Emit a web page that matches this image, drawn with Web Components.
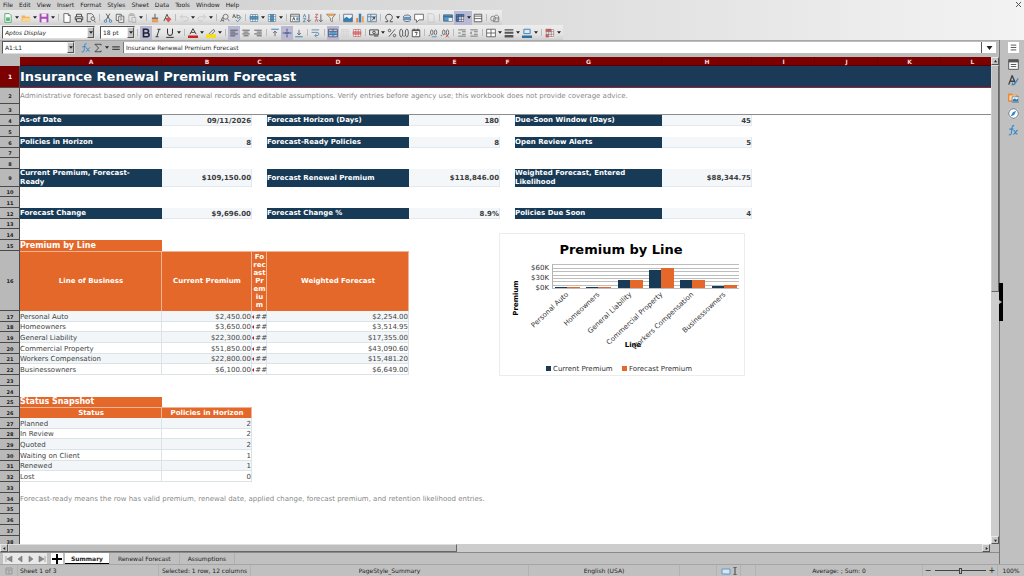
<!DOCTYPE html>
<html lang="en">
<head>
<meta charset="utf-8">
<title>Insurance Renewal Premium Forecast</title>
<style>
html, body { margin: 0; height: 100%; }
body { font-family: "DejaVu Sans", Verdana, sans-serif; font-size: 6px; color: #1c1c1c; background: #c0c0c0; overflow: hidden; }
</style>
</head>
<body>
<calc-window></calc-window>
<script>
const define = (name, render) => customElements.define(name, class extends HTMLElement {
  connectedCallback() {
    if (!this.shadowRoot) this.attachShadow({ mode: 'open' }).innerHTML = render(this);
  }
});

/* ---------- icons, 16 x 16 ---------- */
const s = (d, c = '#555', w = 1.3) => `<path d="${d}" fill="none" stroke="${c}" stroke-width="${w}"/>`;
const f = (d, c) => `<path d="${d}" fill="${c}"/>`;
const grid = c => s('M2 2.500h12v11H2zM2 6h12M2 10h12M6 2.500v11M10 2.500v11', c, 1.1);
const lines = (a, b) => s(`M2 3.500h12M${a} 6.500h${b}M2 9.500h12M${a} 12.500h${b}`, '#444', 1.3);
const icons = {
  new: f('M3 1h7l3 3v11H3z', '#fff') + s('M3 1h7l3 3v11H3z', '#3b9c5a') + f('M5 7h6v6H5z', '#58b778'),
  open: f('M1 4h5l1 2h7v8H1z', '#f3b35c') + f('M3 8h13l-2 6H1z', '#fbd38f'),
  save: f('M1 1h14v14H1z', '#a54bb5') + f('M4 1h8v5H4zM4 9h8v6H4z', '#f5e6f7'),
  pdf: f('M3 1h7l3 3v11H3z', '#fff') + s('M3 1h7l3 3v11H3zM10 1v3h3'),
  print: s('M4 6V2h8v4M4 11H2V6h12v5h-2M4 9h8v5H4z', '#444', 1.5),
  preview: s('M12 6V4L9 1H2v13h6', '#555') + s('M8 9a3 3 0 1 0 6 0a3 3 0 1 0 -6 0M13 12l2 3', '#555'),
  cut: s('M5 1l6 10M11 1L5 11', '#444') + s('M2 13a2 2 0 1 0 4 0a2 2 0 1 0 -4 0M10 13a2 2 0 1 0 4 0a2 2 0 1 0 -4 0', '#3a86c4', 1.5),
  copy: f('M2 2h8v10H2z', '#eee') + s('M2 2h8v10H2z') + f('M6 5h8v10H6z', '#fff') + s('M6 5h8v10H6zM8 8h4M8 11h4'),
  paste: s('M3 3h9v4M3 3v11h4M5 1h5v3H5zM8 7h6v8H8z', '#aaa'),
  clone: f('M7 1h2v6h4v3H3V7h4z', '#777') + f('M3 10h10v5H3z', '#ef9a55'),
  clear: s('M3 13L8 2l3 7M5 9h6', '#555', 1.6) + f('M6 10l5-4 4 4-5 5z', '#d9534f'),
  undo: s('M3 6h7a4 3 0 0 1 0 7H7M6 2L2 6l4 4', '#c4c4c4'),
  redo: s('M13 6H6a4 3 0 0 0 0 7h3M10 2l4 4-4 4', '#c4c4c4'),
  find: s('M5 6a4 4 0 1 0 8 0a4 4 0 1 0 -8 0M12 9l3 4M1 14l3-7 2 7M2 12h4', '#666'),
  spell: s('M1 8l2-6 3 6M2 6h3M8 2v6h3a2 2 0 0 0 0-4H8', '#666') + s('M6 11l3 3 6-7', '#3a86c4'),
  row: f('M1 2h14v12H1z', '#fff') + f('M1 5h14v5H1z', '#4d9fd6') + grid('#55758c'),
  col: f('M1 2h14v12H1z', '#fff') + f('M5 2h6v12H5z', '#4d9fd6') + grid('#55758c'),
  table: f('M1 2h14v12H1z', '#fff') + s('M1 2h14v12H1zM1 5h14', '#555') + s('M4 12l2-5 2 5', '#333') + f('M10 7h4v5h-4z', '#4d9fd6'),
  asc: s('M2 7l2-5 2 5M2 9h4l-4 5h4', '#4a7da5') + s('M11 2v12M8 11l3 3 3-3', '#555'),
  desc: s('M2 2h4L2 7h4M2 14l2-5 2 5', '#b8505a') + s('M11 2v12M8 11l3 3 3-3', '#555'),
  filter: f('M1 2h14l-5 6v6l-4-2V8z', '#fff') + s('M1 2h14l-5 6v6l-3-2V8z', '#666') + f('M2 2h12l-2 3H4z', '#f0a050'),
  image: f('M1 2h14v12H1z', '#e9f4fb') + f('M1 14V9l5-3 4 3 5-3v8z', '#2f7fbb') + s('M1 2h14v12H1z', '#667'),
  chart: f('M2 8h3v7H2z', '#e98b3e') + f('M6 1h4v14H6z', '#3a7fb5') + f('M11 5h3v10h-3z', '#e9a75e'),
  pivot: s('M1 2h14v12H1zM1 6h14M6 2v12', '#4a7da5') + s('M8 12l4-5M12 7v3M12 7H9', '#333'),
  omega: s('M2 14h4v-2C0 8 3 2 8 2s8 6 2 10v2h4', '#444', 1.5),
  link: s('M2 7c0-5 12-5 12 0zM2 10c0 5 12 5 12 0z', '#557') + f('M2 7h12v3H2z', '#4d9fd6'),
  comment: f('M1 2h14v9H8l-4 4v-4H1z', '#fff') + s('M1 2h14v9H8l-4 4v-4H1z'),
  header: s('M3 1h7l3 3v11H3z', '#c8c8c8'),
  edit: f('M1 3h14v10H1z', '#4d9fd6') + s('M1 3h14v10H1zM1 6h14', '#456') + f('M9 8h6v5H9z', '#eee'),
  freeze: f('M1 2h14v12H1z', '#fff') + f('M1 2h14v4H1zM1 2h5v12H1z', '#3a86c4') + grid('#446'),
  split: f('M2 2h12v12H2z', '#fff') + s('M2 2h12v12H2zM2 5h12M2 9h12', '#555', 1.4),
  shapes: s('M1 9a4 4 0 1 0 8 0a4 4 0 1 0 -8 0M7 5a4 4 0 1 1 5 6', '#777') + s('M6 8h8v6H6z', '#777'),
  underline: s('M4 1v7a4 4 0 0 0 8 0V1M2 15h12', '#333', 1.6),
  bold: s('M4 2h5a3 3 0 0 1 0 6H4zM4 8h6a3 3 0 0 1 0 6H4z', '#223', 2.6),
  italic: s('M7 2h5M4 14h5M10 2L6 14', '#333', 1.5),
  fcolor: s('M3 10L8 1l5 9M5 7h6', '#444', 1.6) + f('M0 12h16v4H0z', '#c9211e'),
  hcolor: s('M5 9l7-7 2 3-6 6z', '#555') + f('M0 10h16v6H0z', '#f2e01c'),
  left: lines(2, 8), center: lines(4, 8), right: lines(6, 8),
  top: s('M2 2h12', '#3a86c4', 1.6) + s('M8 13V5M5 8l3-3 3 3', '#555'),
  middle: s('M1 8h14', '#3a5f9c', 1.6) + s('M8 1v5M8 15v-5M5 8h6', '#446'),
  bottom: s('M2 14h12', '#3a86c4', 1.6) + s('M8 3v8M5 8l3 3 3-3', '#555'),
  wrap: s('M1 3h12M1 7h10a3 3 0 0 1 0 5H7M9 9l-3 3 3 3', '#4a7da5'),
  merge: f('M1 2h14v12H1z', '#fff') + f('M2 5h12v6H2z', '#4d9fd6') + s('M1 2h14v12H1zM8 2v3M8 11v3M1 5h14M1 11h14', '#446'),
  unmerge: grid('#cfcfcf'),
  cells: f('M1 2h14v12H1z', '#fff') + f('M1 6h14v4H1z', '#eb8f8a') + grid('#b95a5a'),
  currency: s('M1 3h14v8H1zM6 7a2 2 0 1 0 4 0a2 2 0 1 0 -4 0', '#444', 1.5) + f('M8 9h7v5H8z', '#777'),
  percent: s('M3 14L13 2M2 4a2 2 0 1 0 4 0a2 2 0 1 0 -4 0M10 12a2 2 0 1 0 4 0a2 2 0 1 0 -4 0', '#444'),
  number: s('M1 8a2 5 0 1 0 5 0a2 5 0 1 0 -5 0M10 8a2 5 0 1 0 5 0a2 5 0 1 0 -5 0M8 12v2', '#444'),
  date: f('M2 3h12v11H2z', '#fff') + s('M2 3h12v11H2zM5 1v3M11 1v3M6 7h4l-2 5', '#444', 1.4) + f('M2 3h12v2H2z', '#555'),
  addDec: s('M4 7a2 4 0 1 0 4 0a2 4 0 1 0 -4 0M10 7a2 4 0 1 0 4 0a2 4 0 1 0 -4 0M2 11v2', '#555') + s('M6 14h8', '#3a86c4'),
  delDec: s('M4 7a2 4 0 1 0 4 0a2 4 0 1 0 -4 0M10 7a2 4 0 1 0 4 0a2 4 0 1 0 -4 0M2 11v2', '#555') + s('M9 10l5 5M14 10l-5 5', '#c94b4b'),
  indent: s('M2 3h12M8 6h6M8 10h6M2 13h12M2 8h4', '#666'),
  outdent: s('M2 3h12M8 6h6M8 10h6M2 13h12M5 6L2 8l3 2', '#666'),
  borders: f('M1 2h14v12H1z', '#fff') + s('M1 2h14v12H1zM8 2v12M1 8h14', '#555'),
  style: f('M1 2h14v2H1zM1 6h14v3H1zM1 11h14v4H1z', '#555'),
  bcolor: s('M3 2h10v7H3z', '#3a86c4', 1.6) + f('M0 12h16v4H0z', '#2f6f9f'),
  cond: f('M1 1h14v14H1z', '#fff') + f('M1 1h9v5H1zM1 10h5v5H1z', '#e0605a') + grid('#8a6a6a'),
  settings: f('M0 0h16v16H0z', '#fff') + s('M4 4.500h8M4 8h8M4 11.500h8', '#555', 1.4),
  properties: f('M1 1h14v14H1z', '#fff') + s('M1 1h14v14H1zM4 8h8M4 11h8', '#555', 1.4) + f('M1 1h14v4H1z', '#555'),
  styles: s('M1 14L6 1l5 11M3 9h6', '#444', 2) + s('M15 5l-6 9H6l1-3', '#3a86c4', 1.7),
  gallery: f('M0 2h6l1 2h7v10H0z', '#e98b3e') + f('M2 5h10v7H2z', '#fbd9ae') + f('M6 7h10v8H6z', '#fff') + f('M7 14v-3l3-2 2 2 3-2v5z', '#2f7fbb') + s('M6 7h10v8H6z', '#567', 1),
  navigator: f('M0 8a8 8 0 1 0 16 0a8 8 0 1 0 -16 0', '#fff') + s('M1 8a7 7 0 1 0 14 0a7 7 0 1 0 -14 0', '#456') + f('M12 4L9 10l-5 2 3-6z', '#2f86c9'),
  fx: s('M9 1c-4-1-3 5-4 10c0 3-2 4-4 3M2 6h6M8 8c3-1 2 6 6 5M14 7l-6 7', '#2f86c9', 1.5),
  sigma: s('M13 4V2H3l6 6-6 6h10v-2', '#444', 1.5),
  equals: s('M2 6h12M2 10h12', '#444', 2)
};
const svg = (name, size = 10) => `<svg viewBox="0 0 16 16" width="${size}" height="${size}" aria-hidden="true">${icons[name]}</svg>`;
const caret = '<svg class="caret" viewBox="0 0 6 4" width="4" height="3" aria-hidden="true"><path d="M0 0h6L3 4z" fill="#222"/></svg>';

/* ---------- menu ---------- */
define('menu-bar', () => `<style>
  :host { display: flex; align-items: center; justify-content: space-between; height: 10px; padding: 0 3px; }
  nav { display: flex; gap: 6px; }
  button { all: unset; line-height: 10px; }
</style><nav aria-label="Menu">${['File','Edit','View','Insert','Format','Styles','Sheet','Data','Tools','Window','Help'].map(m => `<button>${m}</button>`).join('')}</nav>
<button aria-label="Close"><svg viewBox="0 0 5 5" width="5" height="5"><path d="M0 0l5 5M5 0L0 5" stroke="#555"/></svg></button>`);

/* ---------- toolbars ---------- */
define('tool-bar', el => `<style>
  :host { display: flex; width: fit-content; align-items: center; height: 15px; padding: 0 1px 0 2px; background: linear-gradient(#ededed, #e4e4e4 60%, #cfcfcf); }
  button { all: unset; display: flex; align-items: center; height: 14px; }
  .i { width: 12px; display: flex; justify-content: center; height: 14px; align-items: center; }
  .c { width: 6px; display: flex; justify-content: center; }
  .on { background: #b9b9d3; }
  hr { border: 0; width: 1px; height: 7px; margin: 0 2px; background: #bbb; }
</style><slot></slot>${el.getAttribute('items').split(' ').map(n => {
  if (n === '|') return '<hr>';
  const name = n.replace(/[*>]/g, '');
  return `<button aria-label="${name}" class="${n.includes('*') ? 'on' : ''}"><span class="i">${svg(name)}</span>${n.includes('>') ? `<span class="c">${caret}</span>` : ''}</button>`;
}).join('')}`);

define('pick-list', el => `<style>
  :host { display: grid; box-sizing: border-box; height: 13px; background: #fff; border: 1px solid; border-color: #555 #ddd #ddd #555; margin-right: var(--after, 5px); }
  select, input, .b { grid-area: 1 / 1; }
  select, input { appearance: none; border: 0; background: none; padding: 0 0 0 2px; margin: 0; font: inherit; color: inherit; min-width: 0; width: 100%; height: 11px; outline: 0; box-sizing: border-box; }
  .b { justify-self: end; pointer-events: none; width: 7px; display: flex; align-items: center; justify-content: center; background: #c4c4c4; border: 1px solid; border-color: #eee #555 #555 #eee; box-sizing: border-box; }
</style>${el.hasAttribute('editable') ? `<input aria-label="${el.getAttribute('label')}" value="${el.getAttribute('value')}">` : `<select aria-label="${el.getAttribute('label')}"><option>${el.getAttribute('value')}</option></select>`}<span class="b">${caret}</span>`);

define('formula-bar', () => `<style>
  :host { display: flex; align-items: center; height: 17px; box-sizing: border-box; border-top: 1px solid #a8a8a8; padding: 0 3px 3px 2px; background: #bdbdbd; }
  pick-list { width: 73px; --after: 6px; }
  .tools { display: flex; align-items: center; width: 42px; gap: 2px; }
  button { all: unset; display: flex; }
  input { flex: 1; min-width: 0; height: 11px; box-sizing: border-box; border: 0; border-left: 1px solid #777; padding: 0 0 0 2px; font: inherit; color: inherit; background: #fff; }
  .drop { width: 14px; height: 11px; background: #fff; border-left: 1px solid #555; align-items: center; justify-content: center; }
  .drop .caret { width: 7px; height: 4px; }
</style><pick-list editable label="Name Box" value="A1:L1"></pick-list>
<div class="tools"><button aria-label="Function Wizard">${svg('fx')}</button><button aria-label="Select Function">${svg('sigma')}</button><button aria-label="Functions">${caret}</button><button aria-label="Formula">${svg('equals')}</button></div>
<input aria-label="Input line" value="Insurance Renewal Premium Forecast"><button class="drop" aria-label="Expand Formula Bar">${caret}</button>`);

/* ---------- sheet ---------- */
const heights = [22,16,11,11,11,11,10,11,18,10,11,11,10,11,11,60,11,10,11,11,10,11,11,11,10,11,11,10,11,11,10,11,11,11,10,11,11,11];
const widths = [142,90,15,142,91,15,147,90,63,63,63,63];
const cells = {
  1: { A: ['title', 'Insurance Renewal Premium Forecast', 12] },
  2: { A: ['note', 'Administrative forecast based only on entered renewal records and editable assumptions. Verify entries before agency use; this workbook does not provide coverage advice.', 12] },
  15: { A: ['band', 'Premium by Line'] },
  16: { A: ['head', 'Line of Business'], B: ['head', 'Current Premium'], C: ['head', 'Fo<br>rec<br>ast<br>Pr<br>em<br>iu<br>m'], D: ['head', 'Weighted Forecast'] },
  25: { A: ['band', 'Status Snapshot'] },
  26: { A: ['head', 'Status'], B: ['head', 'Policies in Horizon'] },
  34: { A: ['note', 'Forecast-ready means the row has valid premium, renewal date, applied change, forecast premium, and retention likelihood entries.', 12] }
};
[[4, 'As-of Date', '09/11/2026', 'Forecast Horizon (Days)', '180', 'Due-Soon Window (Days)', '45'],
 [6, 'Policies in Horizon', '8', 'Forecast-Ready Policies', '8', 'Open Review Alerts', '5'],
 [9, 'Current Premium, Forecast-<br>Ready', '$109,150.00', 'Forecast Renewal Premium', '$118,846.00', 'Weighted Forecast, Entered<br>Likelihood', '$88,344.75'],
 [12, 'Forecast Change', '$9,696.00', 'Forecast Change %', '8.9%', 'Policies Due Soon', '4']
].forEach(([r, a, b, d, e, g, h]) => cells[r] = { A: ['label', a], B: ['value', b], D: ['label', d], E: ['value', e], G: ['label', g], H: ['value', h] });
[['Personal Auto', '$2,450.00', '$2,254.00'], ['Homeowners', '$3,650.00', '$3,514.95'], ['General Liability', '$22,300.00', '$17,355.00'],
 ['Commercial Property', '$51,850.00', '$43,090.60'], ['Workers Compensation', '$22,800.00', '$15,481.20'], ['Businessowners', '$6,100.00', '$6,649.00']
].forEach(([a, b, d], i) => { const z = i % 2 ? '' : ' alt'; cells[17 + i] = { A: ['cell' + z, a], B: ['cell num' + z, b], C: ['cell over' + z, '##'], D: ['cell num' + z, d] }; });
[['Planned', 2], ['In Review', 2], ['Quoted', 2], ['Waiting on Client', 1], ['Renewed', 1], ['Lost', 0]
].forEach(([a, b], i) => { const z = i % 2 ? '' : ' alt'; cells[27 + i] = { A: ['cell' + z, a], B: ['cell num' + z, b] }; });

const sheetRow = (h, i) => {
  const n = i + 1, data = cells[n] || {};
  let out = `<tr class="r${n}" style="height:${h}px"><th scope="row">${n}</th>`;
  for (let c = 0; c < 12;) {
    const d = data['ABCDEFGHIJKL'[c]], span = d && d[2] || 1;
    out += d ? `<td class="${d[0]}"${span > 1 ? ` colspan="${span}"` : ''}>${d[1]}</td>` : '<td></td>';
    c += span;
  }
  return out + '</tr>';
};

define('sheet-grid', () => `<style>
  :host { display: block; position: relative; flex: 1; min-width: 0; overflow: hidden; background: #fff; font-size: 7px; color: #444; }
  table { table-layout: fixed; border-collapse: separate; border-spacing: 0; width: max(100%, 1004px); line-height: 10px; }
  td, th { padding: 0; }
  td { white-space: nowrap; }
  thead th { height: 9px; line-height: 8px; font-size: 6px; color: #f3dcdc; background: #7d0000; box-shadow: inset 0 -1px #500010, inset -1px 0 #6a0000; }
  thead td { background: #bdbdbd; }
  tbody th { background: #b9b9b9; color: #222; font-size: 5px; font-weight: bold; box-shadow: inset -1px -1px #4a4a4a; }
  .r1 th { background: #7d0000; color: #fff; font-size: 6px; }
  .r3 td { box-shadow: inset 0 -1px #8c8c8c; }
  .title { background: #1a3a58; color: #fff; font-size: 13px; font-weight: bold; line-height: 20px; box-shadow: inset 0 -1px #a02038; }
  .note { color: #8a8a8a; }
  .label { background: #173a57; color: #fff; font-weight: bold; line-height: 9px; }
  .value { background: #f4f7f9; font-weight: bold; text-align: right; color: #3c3c3c; padding-right: 1px; box-shadow: inset -1px -1px #e3e9ec; }
  .band { background: #e36829; color: #fff; font-size: 8px; font-weight: bold; }
  .head { background: #e36829; color: #fff; font-weight: bold; text-align: center; line-height: 8px; box-shadow: inset -1px 0 #f0b494, inset 0 1px #f0b494; }
  .cell { box-shadow: inset -1px -1px #dbe3e7; }
  .alt { background: #f2f6f8; }
  .num { text-align: right; padding-right: 1px; }
  .over { text-align: right; }
  .over::before { content: ""; float: left; margin-top: 3px; border: 2px solid transparent; border-right-color: #b3123a; border-left: 0; }
  premium-chart { position: absolute; left: 499px; top: 176px; }
</style><table aria-label="Summary sheet"><colgroup><col style="width:20px">${widths.map((w, i) => i < 11 ? `<col style="width:${w}px">` : '<col>').join('')}</colgroup>
<thead><tr><td></td>${[...'ABCDEFGHIJKL'].map(c => `<th scope="col">${c}</th>`).join('')}</tr></thead><tbody>${heights.map(sheetRow).join('')}</tbody></table><premium-chart></premium-chart>`);

/* ---------- chart ---------- */
define('premium-chart', () => {
  const data = [['Personal Auto', 1, 1], ['Homeowners', 1, 1], ['General Liability', 8, 8], ['Commercial Property', 18, 20], ['Workers Compensation', 8, 8], ['Businessowners', 2, 3]];
  return `<style>
  :host { display: block; width: 246px; height: 143px; background: #fff; }
  svg { display: block; }
  text { font-family: "DejaVu Sans", sans-serif; font-size: 7px; fill: #333; }
  .t { font-size: 13px; font-weight: bold; fill: #000; }
  .a { font-weight: bold; fill: #000; }
</style><svg viewBox="0 0 246 143" width="246" height="143" role="img" aria-label="Premium by Line">
<rect x="0.500" y="0.500" width="245" height="142" fill="#fff" stroke="#ececec"/>
<text class="t" x="122" y="21" text-anchor="middle">Premium by Line</text>
${[31, 35, 38, 42, 45, 48, 52, 55].map(y => `<path d="M53 ${y}.500h187" stroke="#bdbdbd"/>`).join('')}<path d="M53.500 31v24" stroke="#b3b3b3"/>
<text x="50" y="37" text-anchor="end">$60K</text><text x="50" y="47" text-anchor="end">$30K</text><text x="50" y="57" text-anchor="end">$0K</text>
${data.map(([, a, b], i) => { const x = 56 + Math.round(i * 31.3); return `<path d="M${x} ${55 - a}h12v${a}h-12z" fill="#173a57"/><path d="M${x + 12} ${55 - b}h13v${b}h-13z" fill="#e36829"/>`; }).join('')}
<text class="a" x="134" y="114" text-anchor="middle">Line</text>
${data.map(([n], i) => { const x = 70 + Math.round(i * 31.3); return `<text transform="translate(${x} 62) rotate(-43)" text-anchor="end">${n}</text>`; }).join('')}
<text class="a" transform="translate(19 65) rotate(-90)" text-anchor="middle">Premium</text>
<path d="M47 133h5v5h-5z" fill="#173a57"/><text x="54" y="138">Current Premium</text>
<path d="M123 133h5v5h-5z" fill="#e36829"/><text x="130" y="138">Forecast Premium</text>
</svg>`; });

/* ---------- scroll bars ---------- */
define('scroll-track', el => {
  const v = el.hasAttribute('vertical');
  const tri = d => `<svg viewBox="0 0 4 4" width="3" height="3"><path d="${d}" fill="#222"/></svg>`;
  return `<style>
  :host { display: flex; flex-direction: ${v ? 'column' : 'row'}; ${v ? 'width' : 'height'}: 8px; background: #cdcdcd; ${v ? '' : 'margin-right: 9px;'} }
  button { all: unset; flex: 0 0 8px; ${v ? 'height' : 'width'}: 8px; display: flex; align-items: center; justify-content: center; background: #c6c6c6; box-sizing: border-box; border: 1px solid; border-color: #e8e8e8 #555 #555 #e8e8e8; }
  .thumb { flex: ${v ? 48 : 46}; background: #bebebe; box-sizing: border-box; border: 1px solid; border-color: #dedede #666 #666 #cfcfcf; }
  .rest { flex: ${v ? 52 : 54}; }
</style><button aria-label="Back">${tri(v ? 'M0 3h4L2 0z' : 'M3 0v4L0 2z')}</button><div class="thumb"></div><div class="rest"></div><button aria-label="Forward">${tri(v ? 'M0 1h4L2 4z' : 'M1 0v4L4 2z')}</button>`; });

/* ---------- tabs, sidebar, status ---------- */
define('sheet-tabs', () => `<style>
  :host { display: flex; align-items: center; height: 12px; background: #c0c0c0; box-sizing: border-box; border-top: 1px solid #8a8a8a; }
  .nav { display: flex; margin: 0 2px 0 3px; background: #e8e8e8; }
  .nav button { width: 11px; justify-content: center; }
  .nav .add { width: 12px; background: #fff; border-left: 4px solid #c0c0c0; }
  button { all: unset; display: flex; align-items: center; height: 11px; }
  .tab { padding: 0 8px; border-right: 1px solid #b0b0b0; }
  .tab.on { background: #fff; font-weight: bold; padding: 0 6px; box-shadow: inset 0 -1px #000; }
</style><div class="nav">${['M1 1v6M7 1v6L2 4z', 'M6 1v6L2 4z', 'M2 1v6l4-3z', 'M1 1v6l5-3zM7 1v6'].map((d, i) => `<button aria-label="${['First', 'Previous', 'Next', 'Last'][i]} sheet"><svg viewBox="0 0 8 8" width="8" height="8"><path d="${d}" fill="#888" stroke="#777" stroke-width=".6"/></svg></button>`).join('')}<button class="add" aria-label="Add sheet"><svg viewBox="0 0 10 10" width="10" height="10"><path d="M5 0v10M0 5h10" stroke="#000" stroke-width="2"/></svg></button></div>
<button class="tab on">Summary</button><button class="tab">Renewal Forecast</button><button class="tab">Assumptions</button>`);

define('side-bar', () => `<style>
  :host { display: flex; align-items: center; width: 25px; background: #c0c0c0; box-shadow: inset 1px 0 #777; }
  .grip { all: unset; width: 4px; height: 38px; background: #000; display: flex; align-items: center; }
  nav { align-self: flex-start; display: flex; flex-direction: column; justify-content: space-between; height: 94px; padding: 2px 0 0 5px; }
  nav button { all: unset; display: flex; width: 11px; height: 11px; }
</style><button class="grip" aria-label="Hide sidebar"><svg viewBox="0 0 3 4" width="3" height="4"><path d="M0 0v4l3-2z" fill="#bbb"/></svg></button><nav aria-label="Sidebar">${['settings', 'properties', 'styles', 'gallery', 'navigator', 'fx'].map(n => `<button aria-label="${n}">${svg(n, 11)}</button>`).join('')}</nav>`);

define('status-bar', () => `<style>
  :host { display: block; }
  .bar { display: grid; grid-template-columns: 18px 141fr 92fr 278fr 151fr 37fr 24fr 15fr 167fr 75px 26px; height: 12px; box-sizing: border-box; border-top: 1px solid #a5a5a5; background: #c0c0c0; }
  .bar > span { display: flex; align-items: center; justify-content: center; white-space: nowrap; border-right: 1px solid #b2b2b2; min-width: 0; box-sizing: border-box; }
  .bar > .sheet { justify-content: flex-start; padding-left: 2px; }
  .bar > .zoom { gap: 3px; }
  .bar > .pct { border: 0; }
  button { all: unset; font-size: 8px; line-height: 8px; }
  input { appearance: none; width: 51px; height: 7px; margin: 0; background: linear-gradient(#444, #444) center / 100% 1px no-repeat; }
  input::-webkit-slider-thumb { appearance: none; width: 3px; height: 6px; background: #c0c0c0; border: 1px solid #444; box-sizing: border-box; }
</style><div class="bar"><span><svg viewBox="0 0 8 8" width="8" height="8"><path d="M1 1h6v6H1zM1 3h6M4 3v4" fill="none" stroke="#999"/></svg></span><span class="sheet">Sheet 1 of 3</span><span>Selected: 1 row, 12 columns</span><span>PageStyle_Summary</span><span>English (USA)</span><span></span>
<span><svg viewBox="0 0 16 8" width="16" height="8"><path d="M1 2h8v5H1z" fill="#d5e6f2" stroke="#5a9bc9"/><path d="M12 0h4M14 0v8M12 8h4" stroke="#444" fill="none"/></svg></span><span></span><span>Average: ; Sum: 0</span>
<span class="zoom"><button aria-label="Zoom out">−</button><input type="range" aria-label="Zoom" value="50"><button aria-label="Zoom in">+</button></span><span class="pct">100%</span></div>`);

/* ---------- window ---------- */
define('calc-window', () => `<style>
  :host { display: flex; flex-direction: column; height: 100vh; }
  header { background: linear-gradient(90deg, #cecece, #dcdcdc 50%, #f3f3f3); }
  main { flex: 1; display: flex; min-height: 0; }
  .work { flex: 1; min-width: 0; display: flex; flex-direction: column; }
  .view { flex: 1; display: flex; min-height: 0; }
  .font { width: 93px; font-style: italic; }
  .size { width: 35px; --after: 0; }
</style><header><menu-bar></menu-bar>
<tool-bar items="new> open> save> | pdf print preview | cut copy paste> | clone clear | undo> redo> | find spell | row> col> | table asc desc filter | image chart pivot | omega> link comment header | edit freeze*> split | shapes"></tool-bar>
<tool-bar items="| bold* italic underline> | fcolor> hcolor> | left* center right | top middle* bottom | wrap | merge* unmerge cells | currency> percent number date | addDec delDec | indent outdent | borders> style> bcolor> | cond>"><pick-list class="font" label="Font Name" value="Aptos Display"></pick-list><pick-list class="size" label="Font Size" value="18 pt"></pick-list></tool-bar></header>
<main><div class="work"><formula-bar></formula-bar><div class="view"><sheet-grid></sheet-grid><scroll-track vertical></scroll-track></div><scroll-track></scroll-track><sheet-tabs></sheet-tabs></div><side-bar></side-bar></main><status-bar></status-bar>`);
</script>
</body>
</html>
